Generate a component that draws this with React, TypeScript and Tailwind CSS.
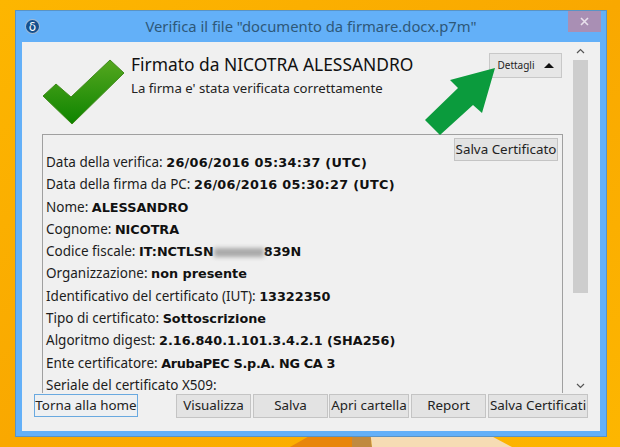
import React from 'react';

const rows: [string, string, string][] = [
  ['Data della verifica:', '26/06/2016 05:34:37 (UTC)', 'tracking-[0.3px]'],
  ['Data della firma da PC:', '26/06/2016 05:30:27 (UTC)', 'tracking-[0.3px]'],
  ['Nome:', 'ALESSANDRO', ''],
  ['Cognome:', 'NICOTRA', ''],
  ['Codice fiscale:', 'IT:NCTLSN', ''],
  ['Organizzazione:', 'non presente', ''],
  ['Identificativo del certificato (IUT):', '13322350', ''],
  ['Tipo di certificato:', 'Sottoscrizione', ''],
  ['Algoritmo digest:', '2.16.840.1.101.3.4.2.1 (SHA256)', ''],
  ['Ente certificatore:', 'ArubaPEC S.p.A. NG CA 3', 'tracking-[-0.3px]'],
  ['Seriale del certificato X509:', '', ''],
];

const Btn: React.FC<{ label: string; className: string }> = ({ label, className }) => (
  <button className={`shrink-0 bg-[#e3e3e3] border border-[#c4c4c4] text-[13.4px] leading-none text-[#222] whitespace-nowrap ${className}`}>
    {label}
  </button>
);

const App: React.FC = () => {
  return (
    <div className="relative w-[620px] h-[447px] overflow-hidden bg-gradient-to-br from-[#fdb600] via-[#f9a800] to-[#fdb600] font-['Open_Sans',sans-serif]">
      {/* wallpaper wedge under the window */}
      <svg className="absolute left-[290px] top-[430px]" width="230" height="17" viewBox="0 0 230 17">
        <path d="M0 17L30 0H62V17Z" fill="#e8860c" />
        <path d="M62 0H80L82 17H62Z" fill="#c08a40" />
        <path d="M80 0H190L222 17H82Z" fill="#f6dcb4" />
      </svg>

      <div className="relative ml-[15px] mt-[10px] w-[592px] h-[427px] bg-[#63b0f8] border border-[#5a93c4] flex flex-col">
        {/* Title bar */}
        <div className="relative h-[31px] shrink-0 flex items-center justify-center">
          <div className="absolute left-[9px] top-[8px] w-[15px] h-[15px] rounded-full bg-[#14508f] border border-white/60 flex items-center justify-center text-white text-[12px] leading-none font-['DejaVu_Sans',sans-serif]">
            δ
          </div>
          <span className="text-[14.8px] text-[#2e5878] font-['Noto_Sans',sans-serif]">
            Verifica il file "documento da firmare.docx.p7m"
          </span>
          <div className="absolute right-[5px] top-0 w-[33px] h-[21px] bg-[#a98fb4] flex items-center justify-center">
            <svg width="9" height="9" viewBox="0 0 9 9">
              <path d="M1 1L8 8M8 1L1 8" stroke="#e8e0ec" strokeWidth="1.6" />
            </svg>
          </div>
        </div>

        {/* Client area */}
        <div className="relative mx-[6px] h-[389px] bg-[#f0f0f0] flex">
          <div className="w-[551px] shrink-0 flex flex-col pl-[20px] pt-[11px]">
            {/* Header */}
            <div className="h-[81px] flex shrink-0">
              <svg className="mt-[6px] shrink-0" width="82" height="66" viewBox="0 0 82 66">
                <defs>
                  <linearGradient id="chk" x1="0" y1="0" x2="0" y2="1">
                    <stop offset="0" stopColor="#55a71f" />
                    <stop offset="1" stopColor="#0e8400" />
                  </linearGradient>
                </defs>
                <path d="M1 37L14 25L29 38L68 1L82 14L30 65Z" fill="url(#chk)" stroke="#3f8a1a" strokeWidth="1" strokeLinejoin="round" />
              </svg>
              <div className="ml-[7px] -mt-[2px] flex flex-col">
                <span className="text-[17.4px] leading-[26px] text-[#111] font-['Noto_Sans',sans-serif]">Firmato da NICOTRA ALESSANDRO</span>
                <span className="mt-[2px] text-[13.2px] leading-[18px] text-[#222] font-['Noto_Sans',sans-serif]">La firma e' stata verificata correttamente</span>
              </div>
              <button className="ml-auto mr-[11px] w-[73px] h-[25px] bg-[#e6e6e6] border border-[#c8c8c8] flex items-center justify-center gap-[9px] text-[10px] text-[#222] font-['Noto_Sans',sans-serif]">
                Dettagli
                <svg width="10" height="5" viewBox="0 0 10 5"><path d="M5 0L10 5H0Z" fill="#111" /></svg>
              </button>
            </div>

            {/* Details panel */}
            <div className="relative h-[259px] mr-[10px] border-t border-x border-[#a0a0a0] pl-[3px] pt-[16px] overflow-hidden shrink-0 font-['Noto_Sans',sans-serif]">
              <Btn label="Salva Certificato" className="absolute right-[4px] top-[3px] w-[104px] h-[23px]" />
              {rows.map(([k, v, extra]) => (
                <div key={k} className="h-[22.3px] leading-[22px] text-[13.5px] text-[#1c1c1c] whitespace-nowrap">
                  {k}{' '}
                  <b className={`font-['DejaVu_Sans',sans-serif] font-bold text-[12.8px] text-[#111] ${extra}`}>{v}</b>
                  {k === 'Codice fiscale:' && (
                    <>
                      <span className="inline-block align-middle w-[50px] h-[9px] bg-[#a9a9a9] blur-[2px]" />
                      <b className="font-['DejaVu_Sans',sans-serif] font-bold text-[12.8px] text-[#111]">839N</b>
                    </>
                  )}
                </div>
              ))}
            </div>

            {/* Bottom buttons */}
            <div className="mt-[1px] -ml-[8px] flex font-['Noto_Sans',sans-serif]">
              <Btn label="Torna alla home" className="w-[104px] h-[23px] !border-[#69a9e0] !bg-[#eef0f2]" />
              <Btn label="Visualizza" className="ml-[38px] w-[75px] h-[24px]" />
              <Btn label="Salva" className="ml-[2px] w-[75px] h-[24px]" />
              <Btn label="Apri cartella" className="ml-[1px] w-[80px] h-[24px]" />
              <Btn label="Report" className="ml-[2px] w-[75px] h-[24px]" />
              <Btn label="Salva Certificati" className="ml-[2px] w-[100px] h-[24px]" />
            </div>
          </div>

          {/* Scrollbar */}
          <div className="w-[15px] flex flex-col items-center">
            <div className="h-[18px] flex items-center justify-center">
              <svg width="9" height="6" viewBox="0 0 9 6"><path d="M1 5L4.5 1.5L8 5" fill="none" stroke="#555" strokeWidth="1.2" /></svg>
            </div>
            <div className="w-full h-[233px] bg-[#cdcdcd]" />
            <div className="mt-auto mb-[36px] h-[18px] flex items-center justify-center">
              <svg width="9" height="6" viewBox="0 0 9 6"><path d="M1 1L4.5 4.5L8 1" fill="none" stroke="#555" strokeWidth="1.2" /></svg>
            </div>
          </div>
        </div>
      </div>

      {/* Green annotation arrow */}
      <svg className="absolute left-[420px] top-[65px]" width="80" height="72" viewBox="0 0 80 72">
        <path d="M75 3L62 48L53 40L20 70L5 55L38 23L30 15Z" fill="#0b9b3d" />
      </svg>
    </div>
  );
};

export default App;
